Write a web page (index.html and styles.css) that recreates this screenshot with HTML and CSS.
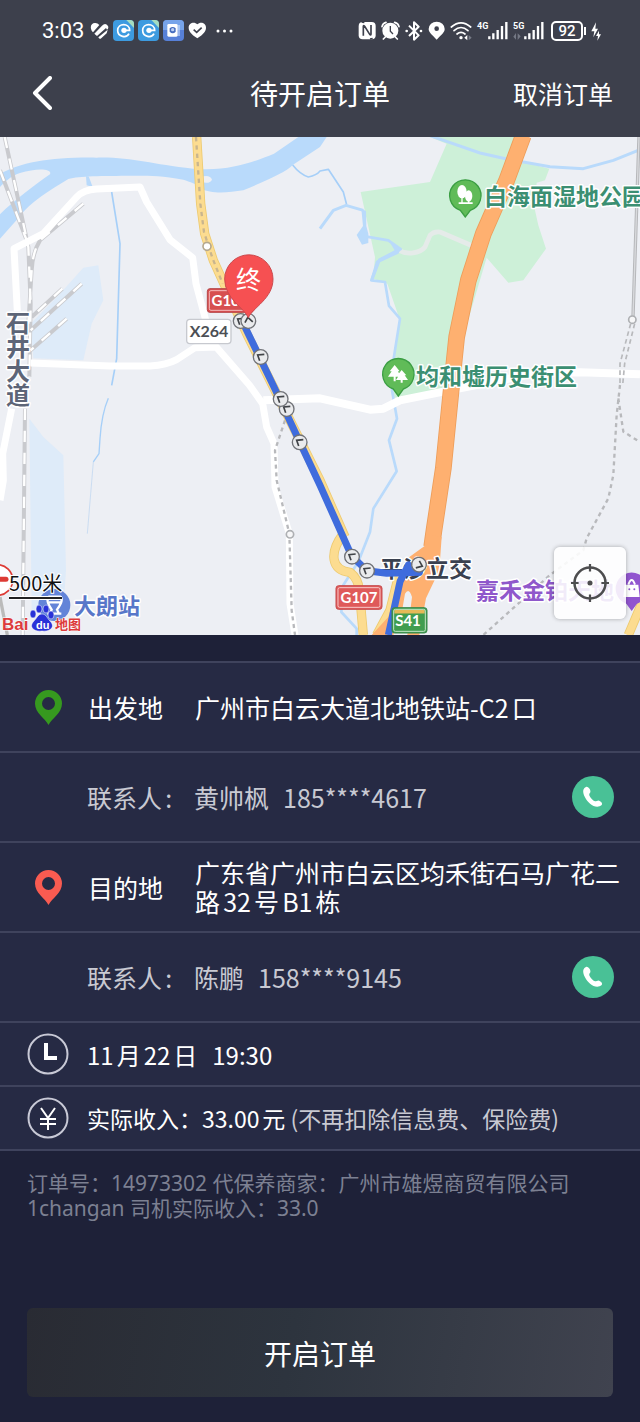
FILE: index.html
```html
<!DOCTYPE html>
<html lang="zh-CN">
<head>
<meta charset="utf-8">
<meta name="viewport" content="width=device-width, initial-scale=1">
<title>待开启订单</title>
<link rel="stylesheet" href="styles.css">
</head>
<body>
<div class="app">
  <header class="header">
    <div class="status">
      <div class="status-left">
        <span class="clock">3:03</span>
        <svg class="ic" width="19" height="18" viewBox="270 66 57 54"><path d="M275 92C268 78 276 68 286 69Q293 69 298 75L279 97ZM283 101L306 77Q316 66 324 78Q327 85 321 89L318 84L291 108ZM295 112L323 89L320 100L302 116Q298 118 295 112Z" fill="#fff"/></svg>
        <svg class="ic" width="21" height="21" viewBox="0 0 63 63"><rect width="63" height="63" rx="12" fill="#3d9be0"/><path d="M40 0H51Q63 0 63 12V24Z" fill="#a5dcc0"/><path d="M33 31H50C50 8 14 8 14 31C14 53 42 54 48 41" fill="none" stroke="#fff" stroke-width="5"/><circle cx="33" cy="31" r="8" fill="#fff"/></svg>
        <svg class="ic" width="21" height="21" viewBox="0 0 63 63"><rect width="63" height="63" rx="12" fill="#3d9be0"/><path d="M40 0H51Q63 0 63 12V24Z" fill="#a5dcc0"/><path d="M33 31H50C50 8 14 8 14 31C14 53 42 54 48 41" fill="none" stroke="#fff" stroke-width="5"/><circle cx="33" cy="31" r="8" fill="#fff"/></svg>
        <svg class="ic" width="21" height="21" viewBox="0 0 63 63"><rect width="63" height="63" rx="12" fill="#5780d8"/><path d="M0 30V12Q0 0 12 0H51Q63 0 63 12V30Z" fill="#77a4ea"/><rect x="13" y="12" width="31" height="38" rx="4" fill="#fff"/><path d="M48 15V48" stroke="#dce8ff" stroke-width="3"/><path d="M20 25Q29 17 38 25V35Q29 45 20 35Z" fill="#466cbe"/><circle cx="29" cy="29" r="5" fill="#bcd0f4"/></svg>
        <svg class="ic" width="19" height="17" viewBox="569 67 57 51"><path d="M597 116C578 103 571 95 571 84C571 68 589 65 597 74C605 65 623 68 623 84C623 95 616 103 597 116Z" fill="#fff"/><path d="M586 90L595 98L610 84" fill="none" stroke="#3d404c" stroke-width="5"/></svg>
        <svg class="ic dots" width="17" height="4" viewBox="0 0 17 4"><circle cx="2" cy="2" r="1.5" fill="#fff"/><circle cx="8.500" cy="2" r="1.500" fill="#fff"/><circle cx="15" cy="2" r="1.500" fill="#fff"/></svg>
      </div>
      <div class="status-right">
        <svg class="ic" width="18" height="19" viewBox="118 64 54 57"><rect x="120" y="67" width="51" height="52" rx="12" fill="#fff"/><path d="M134 108V80Q134 76 138 80L153 104Q157 108 157 103V76" fill="none" stroke="#3d404c" stroke-width="5"/><path d="M129 67L137 69M154 118L162 116" stroke="#3d404c" stroke-width="4"/></svg>
        <svg class="ic" width="19" height="19" viewBox="190 64 57 57"><circle cx="218" cy="93" r="24" fill="#fff"/><path d="M193 81Q195 71 205 68M231 68Q242 71 244 81M203 112L197 118M233 112L239 118" stroke="#fff" stroke-width="5" stroke-linecap="round" fill="none"/><path d="M218 79V95L226 103" stroke="#3d404c" stroke-width="4" fill="none"/></svg>
        <svg class="ic" width="18" height="20" viewBox="263 63 54 60"><path d="M275 77L304 106L290 119V67L304 80L275 108" stroke="#fff" stroke-width="6" fill="none" stroke-linejoin="round"/><circle cx="268" cy="93" r="4" fill="#fff"/><circle cx="311" cy="93" r="4" fill="#fff"/></svg>
        <svg class="ic" width="17" height="19" viewBox="328 64 51 57"><path d="M354 120C338 103 330 98 330 88A24 22 0 0 1 378 88C378 98 370 103 354 120Z" fill="#fff"/><circle cx="354" cy="87" r="7" fill="#3d404c"/></svg>
        <svg class="ic" width="22" height="20" viewBox="393 62 66 60"><g fill="none" stroke="#fff" stroke-width="5" stroke-linecap="round"><path d="M397 80Q426 55 455 80"/><path d="M405 91Q426 72 447 91"/><path d="M414 101Q426 91 438 101"/></g><circle cx="426" cy="112" r="5" fill="#fff"/><path d="M445 104V120L436 112Z" fill="#fff"/><path d="M449 104V120L458 112Z" fill="#777b87"/></svg>
        <span class="signal"><span class="net">4G</span><svg class="bars" width="20" height="19" viewBox="504 64 60 57"><path d="M508 110V119M520 101V119M533 91V119M546 79V119M559 67V119" stroke="#fff" stroke-width="7"/></svg></span>
        <span class="signal"><span class="net">5G</span><svg class="arrows" width="8" height="7" viewBox="0 0 24 21"><path d="M9 0V20L1 11ZM14 1V21L23 10Z" fill="#747884"/></svg><svg class="bars" width="20" height="19" viewBox="504 64 60 57"><path d="M508 110V119M520 101V119M533 91V119M546 79V119M559 67V119" stroke="#fff" stroke-width="7"/></svg></span>
        <span class="battery">92</span>
        <svg class="ic bolt" width="12" height="20" viewBox="809 63 36 60"><path d="M824 67L810 94H819L816 112L830 86H822Z" fill="#fff"/><path d="M833 92L824 108H830L828 122L839 103H833Z" fill="#fff"/></svg>
      </div>
    </div>
    <nav class="nav">
      <button class="back" type="button" aria-label="返回"><svg width="20" height="34" viewBox="0 0 20 34"><path d="M18 2L3 17L18 32" fill="none" stroke="#fff" stroke-width="4" stroke-linecap="round" stroke-linejoin="round"/></svg></button>
      <h1 class="title">待开启订单</h1>
      <button class="cancel" type="button">取消订单</button>
    </nav>
  </header>

  <section class="map" aria-label="路线地图">
    <svg class="map-canvas" viewBox="0 0 640 498" preserveAspectRatio="xMidYMid slice">
      <defs>
        <g id="node"><circle r="22" fill="#eaebed" stroke="#707277" stroke-width="4"/><path d="M-3 11L-9 -6L11 -8" fill="none" stroke="#414448" stroke-width="5"/></g>
      </defs>
      <rect width="640" height="498" fill="#edeff4"/>
      <g transform="scale(.33333)" fill="none" stroke-linejoin="round">
        <path fill="#deebf9" d="M250 392L295 385L310 490L275 560L250 670L100 664L92 560L180 470ZM88 845L130 900L190 955L198 1300L190 1420L95 1420Z"/>
        <path fill="#b9dafb" d="M0 232C40 192 110 140 150 112C158 94 110 92 60 108C30 118 15 135 0 150V112C60 75 160 60 290 62C400 60 450 82 580 95C690 104 760 75 822 50L895 0H980L960 30L878 84C860 105 790 135 730 160C680 168 630 170 605 155C590 140 570 135 550 128C480 115 440 116 400 116C300 117 240 116 205 126C150 160 90 195 60 238L0 305ZM258 118H266L278 150L260 145Z"/>
        <path fill="#edeff4" d="M602 120Q630 112 636 128Q630 142 602 135Z"/>
        <path stroke="#a6cff8" stroke-width="5" d="M878 84Q900 112 925 120Q950 115 960 102L985 97L1030 165L1040 203M335 165L360 320L350 665L335 745"/>
        <path stroke="#a6cff8" stroke-width="4" d="M325 784Q305 830 300 905L297 950L280 975"/>
        <path stroke="#b9d3f0" stroke-width="2" d="M280 975L262 1190"/>
        <path stroke="#b9dafb" stroke-width="9" d="M960 275L1000 220L1038 205L1090 220"/>
        <path fill="#cdf0d8" d="M1290 0H1550V70L1648 95L1635 130L1610 137L1605 220L1615 265L1638 335L1570 430L1525 437L1460 362L1340 765L1180 782L1180 665L1200 550L1162 440L1120 425L1125 360L1082 165L1290 135L1340 20Z"/>
        <path stroke="#e5ebe9" stroke-width="14" d="M1195 340C1220 354 1260 350 1275 330L1290 295Q1300 283 1320 285L1425 330"/>
        <path fill="#b9dafb" d="M1084 215L1098 222L1099 268L1105 290V318L1086 323L1070 294L1089 267Z"/>
        <path stroke="#b9dafb" stroke-width="8" d="M1100 299L1165 310L1202 336L1138 368L1114 430L1155 435L1167 507L1200 545L1181 665L1176 760L1191 845L1167 910L1190 1003L1120 1115L1110 1185L1075 1274L1030 1344L1024 1425L1070 1475V1494"/>
        <path fill="#b9dafb" d="M1165 309L1203 336L1195 350L1140 376L1120 430L1112 425L1128 372L1184 340Z"/>
        <path stroke="#b9dafb" stroke-width="9" d="M1290 -4L1440 48L1520 66L1650 89L1750 95L1840 70L1920 38"/>
        <path stroke="#c9cace" stroke-width="12" d="M14 0L55 190L85 330L92 500L88 720M0 100L80 310M250 200L120 310Q98 345 95 400L85 560M187 455L95 540M245 440L92 580M200 545L92 640M75 815L68 1494"/>
        <path stroke="#fff" stroke-width="7" stroke-dasharray="34 32" d="M14 0L55 190L85 330L92 500L88 720M0 100L80 310M250 200L120 310Q98 345 95 400L85 560M187 455L95 540M245 440L92 580M200 545L92 640M75 815L68 1494"/>
        <path stroke="#bbb" stroke-width="10" d="M0 1380L22 1494"/>
        <g stroke="#fff" stroke-width="21">
          <path d="M52 522L42 335L130 290L230 180Q250 158 290 156L420 150L440 195L510 308L578 362L588 440L620 560L640 620L748 744L788 800L800 870L822 920L825 1050L868 1190L870 1400L885 1494M92 678L330 687H450Q500 684 530 668L585 632L650 630M35 815L8 950L10 1030L0 1090"/>
          <path d="M790 790L960 784L1110 818L1150 815L1200 790L1330 764L1600 710L1740 706L1920 712" stroke-width="24"/>
        </g>
        <path stroke="#b8b9bc" stroke-width="7" stroke-dasharray="12 11" d="M855 850L825 940L830 1030L868 1190L875 1420L885 1494M1860 744L1850 834L1840 1014L1825 1084L1760 1204L1750 1240L1650 1314L1450 1494M1855 784L1870 884L1920 915"/>
        <path stroke="#b8b9bc" stroke-width="5" stroke-dasharray="14 10" d="M1892 560L1860 680V744M1904 560L1874 680L1868 744"/>
        <path stroke="#b6b7ba" stroke-width="10" d="M1917 0L1899 540"/><path stroke="#d9dadd" stroke-width="4" d="M1917 0L1899 540"/>
        <g fill="#f7f7f8" stroke="#aeb0b3" stroke-width="5"><circle cx="870" cy="1192" r="11"/><circle cx="1897" cy="548" r="11"/></g>
        <path stroke="#edca70" stroke-width="28" d="M590 0L602 200L614 290L640 370L740 590L960 1030L1035 1200M1030 1190C985 1250 995 1300 1050 1306Q1075 1325 1078 1360L1090 1494M1195 1320L1170 1420L1130 1494M1925 1400L1885 1494"/>
        <path stroke="#fcdc90" stroke-width="23" d="M590 0L602 200L614 290L640 370L740 590L960 1030L1035 1200M1030 1190C985 1250 995 1300 1050 1306Q1075 1325 1078 1360L1090 1494M1195 1320L1170 1420L1130 1494M1925 1400L1885 1494"/>
        <path stroke="#c9b58e" stroke-width="7" stroke-dasharray="13 12" d="M588 0L601 200L612 285L638 365L668 440"/>
        <path stroke="#ed9d59" stroke-width="50" d="M1570 -5L1520 130L1450 290L1405 430L1370 600L1355 744L1330 994L1302 1180L1295 1230"/>
        <path stroke="#feb070" stroke-width="45" d="M1570 -5L1520 130L1450 290L1405 430L1370 600L1355 744L1330 994L1302 1180L1295 1230"/>
        <path fill="#feb070" d="M1278 1190L1278 1224L1225 1262L1195 1335L1165 1440L1115 1494H1180L1203 1440L1215 1370Q1227 1350 1236 1380L1222 1494H1258L1278 1384L1318 1300L1325 1200Z"/>
        <circle cx="621" cy="328" r="12" fill="#fff" stroke="#b5a88d" stroke-width="5"/>
      </g>
      <text class="place road" x="18" y="174">石井大道</text>
      <text class="place junction" x="380" y="440">平沙立交</text>
      <g transform="scale(.33333)" fill="none">
        <path stroke="#3f6cdd" stroke-width="21" stroke-linejoin="round" d="M735 570L822 750L960 1045L1055 1257L1101 1301L1160 1309L1258 1306L1225 1284L1200 1334L1165 1494"/>
      </g>
      <g transform="scale(.33333)">
        <rect x="622" y="455" width="138" height="71" rx="8" fill="#d74f50" stroke="#b64547" stroke-width="3"/><rect x="628" y="461" width="126" height="59" rx="5" fill="none" stroke="#f4bcbc" stroke-width="3"/>
        <rect x="560" y="547" width="133" height="73" rx="10" fill="#fff" stroke="#c7c9cf" stroke-width="4"/>
        <rect x="1008" y="1346" width="138" height="71" rx="8" fill="#df5a5a" stroke="#c54b4c" stroke-width="3"/><rect x="1014" y="1352" width="126" height="59" rx="5" fill="none" stroke="#f8caca" stroke-width="3"/>
        <rect x="1176" y="1412" width="105" height="76" rx="8" fill="#409d4f" stroke="#38854a" stroke-width="3"/><path d="M1183 1424H1274" stroke="#e4b957" stroke-width="11"/><rect x="1181" y="1417" width="95" height="66" rx="5" fill="none" stroke="#c4e5c7" stroke-width="3"/>
      </g>
      <text class="shield" x="230" y="169">G107</text>
      <text class="shield" x="359" y="466">G107</text>
      <text class="shield" x="408" y="489">S41</text>
      <text class="shield county" x="209" y="200">X264</text>
      <g transform="scale(.33333)">
        <use href="#node" x="722" y="552"/><g transform="translate(745 552) rotate(48)"><use href="#node"/></g><use href="#node" x="782" y="660"/><use href="#node" x="860" y="816"/><use href="#node" x="842" y="786"/><use href="#node" x="899" y="916"/><use href="#node" x="1056" y="1259"/><use href="#node" x="1101" y="1301"/><g transform="translate(1257 1283) rotate(170)"><use href="#node"/></g>
        <path d="M745 542C732 512 674 485 674 426A72 72 0 0 1 819 426C819 485 758 512 745 542Z" fill="#f65052" stroke="#cb484c" stroke-width="3"/>
        <g fill="#60bb58" stroke="#3b9e43" stroke-width="4">
          <path d="M1396 240L1381 220A47 47 0 1 1 1411 220Z"/><path d="M1195 777L1180 756A47 47 0 1 1 1210 756Z"/>
        </g>
        <g fill="#fff">
          <ellipse cx="1386" cy="164" rx="14" ry="20"/><ellipse cx="1406" cy="177" rx="11" ry="17"/><path d="M1384 175H1388V198H1384ZM1404 185H1408V198H1404ZM1376 196H1418V201H1376Z"/>
          <path d="M1184 684L1169 703H1175L1164 719H1181V733H1187V719H1202L1194 703H1199ZM1205 699L1192 715H1197L1188 729H1202V737H1208V729H1224L1214 715H1219Z"/>
        </g>
        <path d="M1895 1422L1879 1400A48 48 0 1 1 1911 1400Z" fill="#9155cf"/><path d="M1874 1343H1915L1919 1380H1870Z" fill="#fff"/><path d="M1885 1343Q1895 1315 1905 1343" fill="none" stroke="#fff" stroke-width="6"/><circle cx="1888" cy="1357" r="3" fill="#9155cf"/><circle cx="1903" cy="1357" r="3" fill="#9155cf"/>
        <circle cx="163" cy="1404" r="48" fill="#6384d8"/><path d="M149 1432L155 1418Q135 1388 147 1379H181Q193 1388 171 1418L178 1432M147 1396H181M142 1430H184" fill="none" stroke="#fff" stroke-width="7"/>
        <circle cx="-8" cy="1329" r="46" fill="#fff" stroke="#dd3b35" stroke-width="5"/><path d="M-40 1327H18" stroke="#dd3b35" stroke-width="15" stroke-linecap="round"/>
      </g>
      <text class="end" x="236" y="152">终</text>
      <text class="place park" x="484" y="68">白海面湿地公园</text>
      <text class="place park" x="416" y="248">均和墟历史街区</text>
      <text class="place mall" x="476" y="462">嘉禾金铂天地</text>
      <text class="place station" x="74" y="477">大朗站</text>
      <text class="scale" x="9" y="454">500米</text>
      <path d="M9 461H62" stroke="#fff" stroke-width="4"/><path d="M9 461H62" stroke="#222" stroke-width="2"/>
      <g fill="#2932d8" stroke="#fff" stroke-width=".5"><ellipse cx="33" cy="477" rx="3" ry="4"/><ellipse cx="39" cy="472" rx="3" ry="4"/><ellipse cx="46" cy="472" rx="3" ry="4"/><ellipse cx="51" cy="478" rx="3" ry="4"/><path d="M42 477C38 477 37 481 34 484C28 490 34 495 42 494C50 495 56 490 50 484C47 481 46 477 42 477Z"/></g>
      <text class="baidu" x="2" y="493">Bai</text><text class="du" x="36" y="492">du</text><text class="baidu cn" x="55" y="492">地图</text>
    </svg>
    <button class="locate" type="button" aria-label="定位"><svg width="38" height="40" viewBox="0 0 120 120"><circle cx="60" cy="60" r="49" fill="none" stroke="#4d4d4f" stroke-width="8"/><path d="M60 0V24M60 96V120M0 60H24M96 60H120" stroke="#4d4d4f" stroke-width="7"/><circle cx="60" cy="60" r="8" fill="#4d4d4f"/></svg></button>
  </section>

  <main class="order">
    <section class="rows">
      <div class="row">
        <svg class="marker from" viewBox="0 0 27 35"><path fill-rule="evenodd" d="M13.500 35C10 28 0 23 0 13.500A13.500 13.500 0 0 1 27 13.500C27 23 17 28 13.500 35ZM13.500 7A6.500 6.500 0 1 0 13.500 20A6.500 6.500 0 1 0 13.500 7Z"/></svg>
        <span class="label">出发地</span><p class="value">广州市白云大道北地铁站-C2口</p>
      </div>
      <div class="row contact">
        <span class="label">联系人:</span><p class="value"><span>黄帅枫</span><span>185****4617</span></p>
        <button class="call" type="button" aria-label="拨打黄帅枫电话"><svg viewBox="0 0 123 123"><path d="M41 32C49 30 57 44 53 49C47 54 53 63 61 70C69 77 72 73 77 72C84 73 91 81 87 85C70 99 47 80 38 62C29 45 33 35 41 32Z" fill="#fff"/></svg></button>
      </div>
      <div class="row">
        <svg class="marker to" viewBox="0 0 27 35"><path fill-rule="evenodd" d="M13.500 35C10 28 0 23 0 13.500A13.500 13.500 0 0 1 27 13.500C27 23 17 28 13.500 35ZM13.500 7A6.500 6.500 0 1 0 13.500 20A6.500 6.500 0 1 0 13.500 7Z"/></svg>
        <span class="label">目的地</span><p class="value">广东省广州市白云区均禾街石马广花二路32号B1栋</p>
      </div>
      <div class="row contact">
        <span class="label">联系人:</span><p class="value"><span>陈鹏</span><span>158****9145</span></p>
        <button class="call" type="button" aria-label="拨打陈鹏电话"><svg viewBox="0 0 123 123"><path d="M41 32C49 30 57 44 53 49C47 54 53 63 61 70C69 77 72 73 77 72C84 73 91 81 87 85C70 99 47 80 38 62C29 45 33 35 41 32Z" fill="#fff"/></svg></button>
      </div>
      <div class="row short time">
        <svg class="round" viewBox="0 0 42 42"><circle cx="21" cy="21" r="19.500" fill="none" stroke="#c8c9d6" stroke-width="2"/><path d="M19 10V25H30" fill="none" stroke="#fff" stroke-width="4"/></svg>
        <p class="detail"><span>11月22日</span><span>19:30</span></p>
      </div>
      <div class="row short">
        <svg class="round" viewBox="0 0 42 42"><circle cx="21" cy="21" r="19.500" fill="none" stroke="#c8c9d6" stroke-width="2"/><path d="M14 11L21 21L28 11M21 21V33M13 22H29M13 27H29" fill="none" stroke="#fff" stroke-width="2"/></svg>
        <p class="detail income">实际收入：33.00元 <span class="note">(不再扣除信息费、保险费)</span></p>
      </div>
    </section>
    <p class="remark">订单号：14973302 代保养商家：广州市雄煜商贸有限公司 1changan 司机实际收入：33.0</p>
    <button class="start" type="button">开启订单</button>
  </main>
</div>
</body>
</html>
```
FILE: styles.css
```css
* { box-sizing: border-box; }
body {
  margin: 0;
  background: #1e2138;
  color: #fff;
  font-family: "Noto Sans CJK SC", sans-serif;
  text-autospace: normal;
}
h1, p { margin: 0; font-weight: 400; }
button {
  border: 0;
  padding: 0;
  background: none;
  color: inherit;
  font-family: inherit;
  cursor: pointer;
}
svg { display: block; flex: none; }
.app { display: flex; flex-direction: column; min-height: 100vh; }

.header { background: #3d404c; padding-bottom: 12px; }
.status {
  display: flex;
  justify-content: space-between;
  align-items: center;
  height: 61px;
  padding: 0 37px 0 42px;
}
.status-left, .status-right { display: flex; align-items: center; gap: 5px; }
.status-left { gap: 4px; }
.clock { font: 22px/24px Roboto, sans-serif; margin-right: 2px; }
.dots { margin-left: 5px; }
.signal { position: relative; display: flex; width: 31px; justify-content: flex-end; }
.net {
  position: absolute;
  top: 0;
  left: 0;
  font: 700 9px/10px Roboto, sans-serif;
}
.arrows { position: absolute; left: 0; bottom: 0; }
.battery {
  position: relative;
  width: 32px;
  height: 20px;
  margin: 0 3px 0 2px;
  border: 2px solid #fff;
  border-radius: 5px;
  font: 500 15px/16px Roboto, sans-serif;
  text-align: center;
}
.battery::after {
  content: "";
  position: absolute;
  right: -5px;
  top: 4px;
  width: 2px;
  height: 8px;
  background: #fff;
}
.nav {
  display: grid;
  grid-template-columns: 1fr auto 1fr;
  align-items: center;
  height: 64px;
  padding: 0 27px;
}
.back { justify-self: start; padding-left: 5px; }
.title { font-size: 28px; line-height: 40px; }
.cancel { justify-self: end; font-size: 25px; line-height: 36px; }

.map { position: relative; background: #edeff4; }
.map-canvas { width: 100%; height: auto; }
.place {
  font-size: 23px;
  font-weight: 700;
  stroke: #fff;
  stroke-width: 3px;
  stroke-linejoin: round;
  paint-order: stroke;
}
.road { fill: #5d6577; font-size: 24px; writing-mode: vertical-rl; }
.junction { fill: #3a414f; }
.park { fill: #3b8f72; }
.mall { fill: #8f58cb; }
.station { fill: #5877c9; font-size: 22px; }
.shield { font: 700 15px Lato, sans-serif; fill: #fff; text-anchor: middle; }
.county { fill: #4c4f55; font-size: 16px; }
.end { font-size: 25px; fill: #fff; }
.scale {
  font-size: 20px;
  fill: #111;
  stroke: #fff;
  stroke-width: 2px;
  paint-order: stroke;
  text-autospace: no-autospace;
}
.baidu {
  font: 700 17px "Liberation Sans", sans-serif;
  fill: #dd3b3b;
  stroke: #fff;
  stroke-width: 1px;
  paint-order: stroke;
}
.cn { font: 700 13px "Noto Sans CJK SC", sans-serif; }
.du { font: 700 11px "Liberation Sans", sans-serif; fill: #fff; }
.locate {
  position: absolute;
  right: 14px;
  bottom: 16px;
  display: grid;
  place-items: center;
  width: 72px;
  height: 72px;
  border-radius: 6px;
  background: rgba(255, 255, 255, .88);
  box-shadow: 0 0 4px rgba(0, 0, 0, .3);
}

.order {
  display: flex;
  flex: 1;
  flex-direction: column;
  padding-top: 26px;
}
.rows { background: #262a44; border-bottom: 2px solid #3f435d; }
.row {
  display: grid;
  grid-template-columns: 42px 80px 1fr;
  align-items: center;
  column-gap: 19px;
  min-height: 90px;
  padding: 0 19px 0 27px;
  border-top: 2px solid #3f435d;
  font-size: 25px;
  line-height: 29px;
}
.row .value { padding-left: 8px; }
.marker { justify-self: center; width: 27px; height: 35px; }
.from { fill: #36991f; }
.to { fill: #f95b51; }
.contact {
  grid-template-columns: 100px 1fr 42px;
  column-gap: 7px;
  padding: 0 26px 0 87px;
  color: #c8c9d2;
}
.contact .value { display: flex; gap: 14px; padding: 0; }
.call {
  width: 42px;
  height: 42px;
  border-radius: 50%;
  background: #49c196;
}
.contact .label { white-space: nowrap; }
.short { grid-template-columns: 42px 1fr; column-gap: 18px; min-height: 64px; }
.round { width: 42px; height: 42px; }
.detail { font-size: 23px; }
.time .detail { display: flex; gap: 15px; font-size: 24px; }
.note { color: #c8c9d2; }
.remark {
  padding: 20px 27px;
  color: #7c8092;
  font-family: "Noto Sans", "Noto Sans CJK SC", sans-serif;
  font-size: 21px;
  line-height: 25px;
}
.start {
  height: 89px;
  margin: auto 27px 25px;
  border-radius: 6px;
  background: linear-gradient(100deg, #292b33, #2d343e 45%, #40434f);
  font-size: 28px;
}
```
